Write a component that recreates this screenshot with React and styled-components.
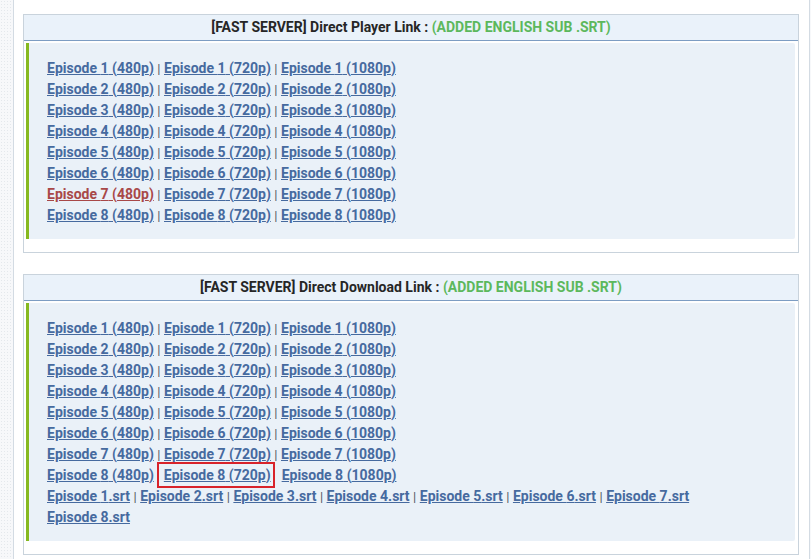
import React from 'react';
import styled, { createGlobalStyle } from 'styled-components';

const GlobalStyle = createGlobalStyle`
  html, body {
    margin: 0;
    padding: 0;
  }

  body {
    background-color: #f7f8fa;
    background-image: radial-gradient(#e4e8ec 0.6px, transparent 0.8px);
    background-size: 3px 3px;
    font-family: Roboto, "Liberation Sans", sans-serif;
  }
`;

const Page = styled.div`
  box-sizing: border-box;
  width: 797px;
  min-height: 559px;
  margin-left: 13px;
  padding: 14px 10px 6px 9px;
  background: #ffffff;
  border-left: 1px solid #d3dbe3;
  border-right: 1px solid #d3dbe3;
`;

const Panel = styled.div`
  border: 1px solid #c9d3dc;
  background: #ffffff;
  margin-bottom: 21px;
`;

const Header = styled.div`
  height: 25px;
  line-height: 25px;
  background: #eaf2fa;
  border-bottom: 1px solid #7d9dc3;
  text-align: center;
  font-size: 14px;
  font-weight: 700;
  color: #262626;
`;

const Note = styled.span`
  color: #5cb85c;
`;

const Body = styled.div`
  margin: 2px 3px 13px 2px;
  padding: 15px 10px 13px 18px;
  background: #eaf1f8;
  border-left: 3px solid #86b920;
  border-radius: 0 2px 2px 0;
`;

const Row = styled.div`
  font-size: 14px;
  line-height: 21px;
  font-weight: 700;
  white-space: nowrap;
`;

const Link = styled.a`
  color: ${props => (props.$visited ? '#a84848' : '#466a9f')};
  text-decoration: underline;
  text-underline-offset: 1px;
  cursor: pointer;
`;

const Sep = styled.span`
  color: #555b62;
  font-weight: 400;
  font-size: 13px;
  margin: 0 3.5px;
`;

const Marked = styled.span`
  border: 2px solid #d8232a;
  padding: 3px 2px 3px 5px;
  margin: 0 7px 0 3px;
`;

const qualities = ['480p', '720p', '1080p'];
const episodes = [1, 2, 3, 4, 5, 6, 7, 8];

const EpisodeRow = ({ ep, visited, marked }) => (
  <Row>
    {qualities.map((q, i) => {
      const link = (
        <Link $visited={visited === q}>
          Episode {ep} ({q})
        </Link>
      );
      if (marked === q) {
        return <Marked key={q}>{link}</Marked>;
      }
      const prevMarked = marked && qualities[i - 1] === marked;
      const nextMarked = marked && qualities[i + 1] === marked;
      return (
        <React.Fragment key={q}>
          {i > 0 && !prevMarked && !nextMarked ? <Sep>|</Sep> : null}
          {link}
        </React.Fragment>
      );
    })}
  </Row>
);

const SubRows = () => (
  <>
    <Row>
      {[1, 2, 3, 4, 5, 6, 7].map((n, i) => (
        <React.Fragment key={n}>
          {i > 0 && <Sep>|</Sep>}
          <Link>Episode {n}.srt</Link>
        </React.Fragment>
      ))}
    </Row>
    <Row>
      <Link>Episode 8.srt</Link>
    </Row>
  </>
);

const Section = ({ title, children }) => (
  <Panel>
    <Header>
      [FAST SERVER] {title} : <Note>(ADDED ENGLISH SUB .SRT)</Note>
    </Header>
    <Body>{children}</Body>
  </Panel>
);

const App = () => (
  <>
    <GlobalStyle />
    <Page>
      <Section title="Direct Player Link">
        {episodes.map(ep => (
          <EpisodeRow key={ep} ep={ep} visited={ep === 7 ? '480p' : null} />
        ))}
      </Section>
      <Section title="Direct Download Link">
        {episodes.map(ep => (
          <EpisodeRow key={ep} ep={ep} marked={ep === 8 ? '720p' : null} />
        ))}
        <SubRows />
      </Section>
    </Page>
  </>
);

export default App;
